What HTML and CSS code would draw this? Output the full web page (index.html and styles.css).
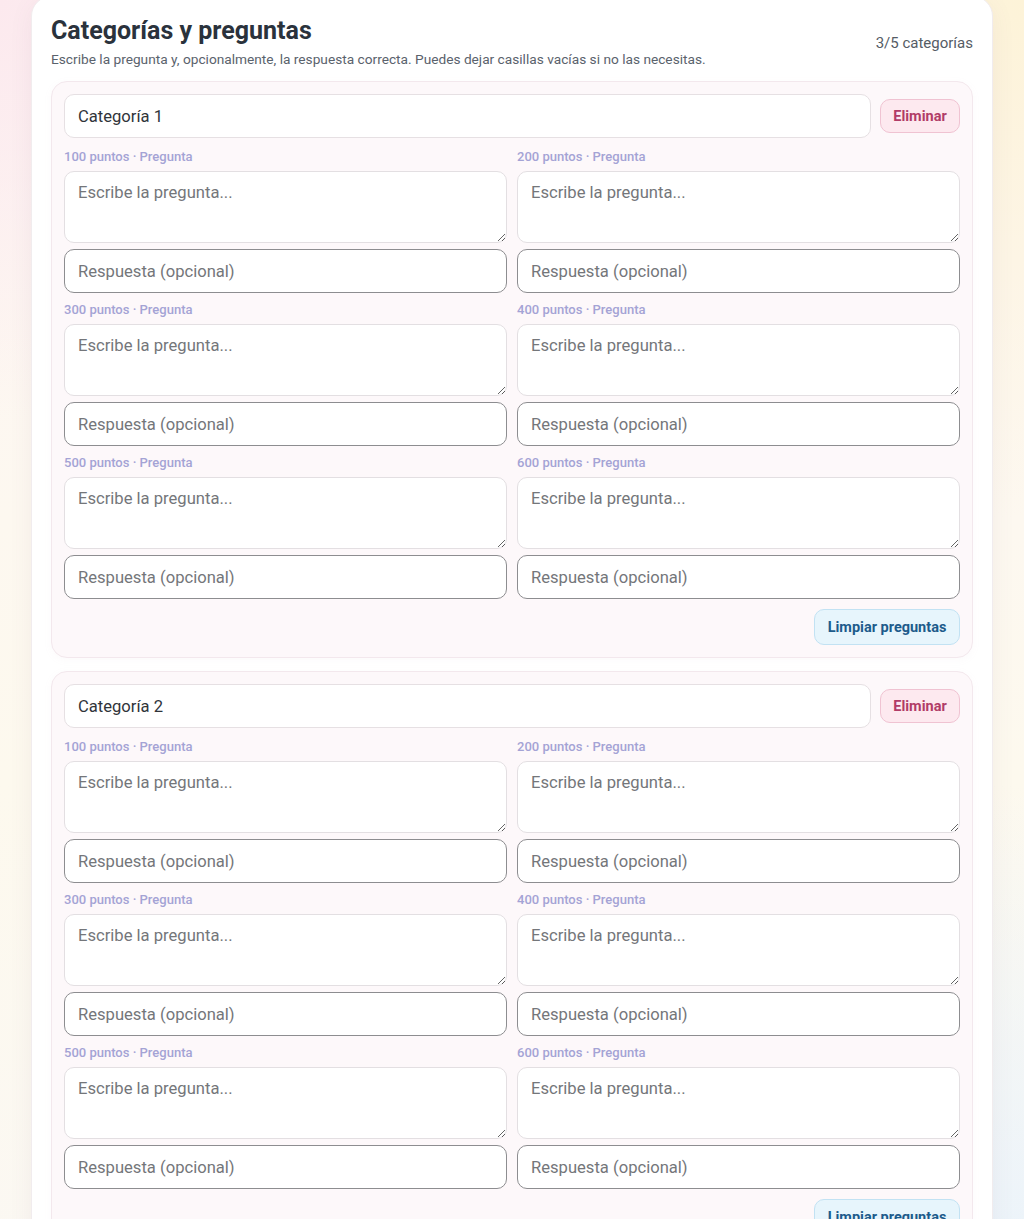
FILE: index.html
```html
<!doctype html>
<html lang="es">
<head>
  <meta charset="UTF-8">
  <meta name="viewport" content="width=device-width, initial-scale=1">
  <title>Categorías y preguntas</title>
  <link rel="stylesheet" href="styles.css">
</head>
<body>
  <section class="panel">
    <div class="panel-head">
      <div>
        <h2 class="panel-title">Categorías y preguntas</h2>
        <p class="panel-sub">Escribe la pregunta y, opcionalmente, la respuesta correcta. Puedes dejar casillas vacías si no las necesitas.</p>
      </div>
      <span class="counter">3/5 categorías</span>
    </div>

    <!-- categoría 1 -->
    <div class="cat">
      <div class="cat-head">
        <input class="cat-name" type="text" value="Categoría 1">
        <button class="btn btn-del">Eliminar</button>
      </div>
      <div class="qgrid">
        <div class="q">
          <label class="q-label">100 puntos · Pregunta</label>
          <textarea class="q-text" placeholder="Escribe la pregunta..."></textarea>
          <input class="q-answer" type="text" placeholder="Respuesta (opcional)">
        </div>
        <div class="q">
          <label class="q-label">200 puntos · Pregunta</label>
          <textarea class="q-text" placeholder="Escribe la pregunta..."></textarea>
          <input class="q-answer" type="text" placeholder="Respuesta (opcional)">
        </div>
        <div class="q">
          <label class="q-label">300 puntos · Pregunta</label>
          <textarea class="q-text" placeholder="Escribe la pregunta..."></textarea>
          <input class="q-answer" type="text" placeholder="Respuesta (opcional)">
        </div>
        <div class="q">
          <label class="q-label">400 puntos · Pregunta</label>
          <textarea class="q-text" placeholder="Escribe la pregunta..."></textarea>
          <input class="q-answer" type="text" placeholder="Respuesta (opcional)">
        </div>
        <div class="q">
          <label class="q-label">500 puntos · Pregunta</label>
          <textarea class="q-text" placeholder="Escribe la pregunta..."></textarea>
          <input class="q-answer" type="text" placeholder="Respuesta (opcional)">
        </div>
        <div class="q">
          <label class="q-label">600 puntos · Pregunta</label>
          <textarea class="q-text" placeholder="Escribe la pregunta..."></textarea>
          <input class="q-answer" type="text" placeholder="Respuesta (opcional)">
        </div>
      </div>
      <div class="cat-foot">
        <button class="btn btn-clear">Limpiar preguntas</button>
      </div>
    </div>

    <!-- categoría 2 -->
    <div class="cat">
      <div class="cat-head">
        <input class="cat-name" type="text" value="Categoría 2">
        <button class="btn btn-del">Eliminar</button>
      </div>
      <div class="qgrid">
        <div class="q">
          <label class="q-label">100 puntos · Pregunta</label>
          <textarea class="q-text" placeholder="Escribe la pregunta..."></textarea>
          <input class="q-answer" type="text" placeholder="Respuesta (opcional)">
        </div>
        <div class="q">
          <label class="q-label">200 puntos · Pregunta</label>
          <textarea class="q-text" placeholder="Escribe la pregunta..."></textarea>
          <input class="q-answer" type="text" placeholder="Respuesta (opcional)">
        </div>
        <div class="q">
          <label class="q-label">300 puntos · Pregunta</label>
          <textarea class="q-text" placeholder="Escribe la pregunta..."></textarea>
          <input class="q-answer" type="text" placeholder="Respuesta (opcional)">
        </div>
        <div class="q">
          <label class="q-label">400 puntos · Pregunta</label>
          <textarea class="q-text" placeholder="Escribe la pregunta..."></textarea>
          <input class="q-answer" type="text" placeholder="Respuesta (opcional)">
        </div>
        <div class="q">
          <label class="q-label">500 puntos · Pregunta</label>
          <textarea class="q-text" placeholder="Escribe la pregunta..."></textarea>
          <input class="q-answer" type="text" placeholder="Respuesta (opcional)">
        </div>
        <div class="q">
          <label class="q-label">600 puntos · Pregunta</label>
          <textarea class="q-text" placeholder="Escribe la pregunta..."></textarea>
          <input class="q-answer" type="text" placeholder="Respuesta (opcional)">
        </div>
      </div>
      <div class="cat-foot">
        <button class="btn btn-clear">Limpiar preguntas</button>
      </div>
    </div>
  </section>
</body>
</html>
```
FILE: styles.css
```css
* {
  box-sizing: border-box;
}
html, body {
  margin: 0;
  min-height: 100%;
}
body {
  font-family: Roboto, "Noto Sans", "Liberation Sans", sans-serif;
  color: #2b2f36;
  background:
    radial-gradient(circle at 0% 0%, #fce9ee 0, rgba(252, 233, 238, 0) 420px),
    radial-gradient(circle at 100% 0%, #fdf3d8 0, rgba(253, 243, 216, 0) 520px),
    radial-gradient(circle at 100% 100%, #eaf3fb 0, rgba(234, 243, 251, 0) 520px),
    linear-gradient(180deg, #fdf6f4 0%, #fdf9ee 60%, #fbf8f3 100%);
  padding: 0 31px;
}

/* tarjeta principal */
.panel {
  margin-top: -4px;
  background: #fff;
  border: 1px solid #f1ecee;
  border-radius: 20px;
  box-shadow: 0 6px 24px rgba(120, 90, 110, 0.07);
  padding: 19px 19px 40px;
}
.panel-head {
  display: flex;
  justify-content: space-between;
  align-items: flex-start;
  margin-bottom: 13px;
}
.panel-title {
  margin: 0;
  font-size: 25px;
  line-height: 30px;
  font-weight: 700;
  color: #2a323c;
}
.panel-sub {
  margin: 4px 0 0;
  font-size: 13.7px;
  line-height: 18px;
  color: #5a626c;
}
.counter {
  margin-top: 17px;
  font-size: 15px;
  line-height: 20px;
  color: #555c65;
}

/* bloque de categoría */
.cat {
  background: #fdf8fa;
  border: 1px solid #f3e8ed;
  border-radius: 16px;
  padding: 12px;
  margin-bottom: 13px;
  box-shadow: 0 2px 8px rgba(200, 150, 170, 0.05);
}
.cat-head {
  display: flex;
  align-items: center;
  gap: 9px;
}
.cat-name {
  flex: 1;
  height: 44px;
  border: 1px solid #e6e0e3;
  border-radius: 10px;
  background: #fff;
  padding: 0 13px;
  font: 16.6px Roboto, "Noto Sans", sans-serif;
  color: #30343a;
  outline: none;
}

.btn {
  font: 700 14.5px Roboto, "Noto Sans", sans-serif;
  border-radius: 10px;
  cursor: pointer;
  padding: 0;
}
.btn-del {
  width: 80px;
  height: 34px;
  background: #fde9ef;
  border: 1px solid #f0c3d2;
  color: #b13c67;
}
.btn-clear {
  width: 146px;
  height: 36px;
  background: #e7f5fc;
  border: 1px solid #c2e2f3;
  color: #1d5b8b;
}

/* preguntas en dos columnas */
.qgrid {
  display: grid;
  grid-template-columns: 1fr 1fr;
  column-gap: 10px;
  row-gap: 9px;
  margin-top: 11px;
}
.q {
  display: flex;
  flex-direction: column;
  gap: 6px;
}
.q-label {
  font-size: 13px;
  line-height: 16px;
  font-weight: 500;
  color: #a4a3d5;
}
.q-text {
  height: 72px;
  border: 1px solid #e3dfe2;
  border-radius: 10px;
  background: #fff;
  padding: 10px 13px;
  font: 16.6px/22px Roboto, "Noto Sans", sans-serif;
  color: #30343a;
  outline: none;
}
.q-answer {
  height: 44px;
  border: 1px solid #8d8d90;
  border-radius: 10px;
  background: #fff;
  padding: 0 13px;
  font: 16.6px Roboto, "Noto Sans", sans-serif;
  color: #30343a;
  outline: none;
}
.q-text::placeholder,
.q-answer::placeholder {
  color: #74767a;
}
.cat-foot {
  display: flex;
  justify-content: flex-end;
  margin-top: 10px;
}
```
